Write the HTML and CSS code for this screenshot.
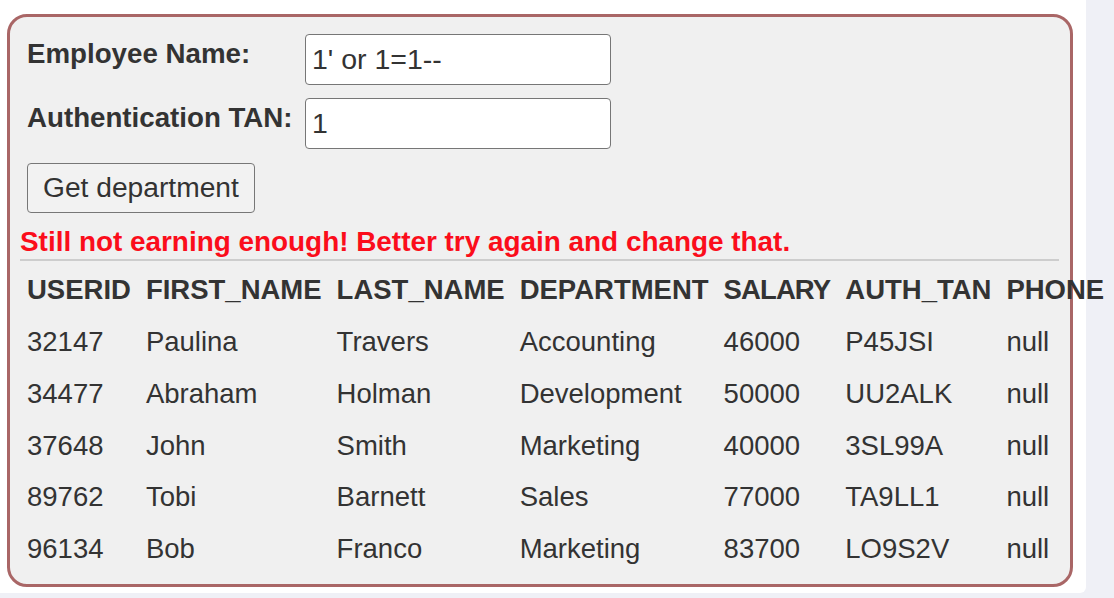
FILE: index.html
```html
<!DOCTYPE html>
<html lang="en">
<head>
<meta charset="utf-8">
<title>SQL Injection</title>
<link rel="stylesheet" href="styles.css">
</head>
<body>
<div class="panel">
  <div class="attack-box">
    <form class="attack-form">
      <div class="fields">
        <label class="field-label" for="name">Employee Name:</label>
        <input class="field-input" id="name" type="text" value="1' or 1=1--">
        <label class="field-label" for="tan">Authentication TAN:</label>
        <input class="field-input" id="tan" type="text" value="1">
      </div>
      <button class="submit-btn" type="button">Get department</button>
    </form>
    <div class="feedback">Still not earning enough! Better try again and change that.</div>
    <table class="results">
      <thead>
        <tr><th>USERID</th><th>FIRST_NAME</th><th>LAST_NAME</th><th>DEPARTMENT</th><th class="narrow">SALARY</th><th>AUTH_TAN</th><th>PHONE</th></tr>
      </thead>
      <tbody>
        <tr><td>32147</td><td>Paulina</td><td>Travers</td><td>Accounting</td><td>46000</td><td>P45JSI</td><td>null</td></tr>
        <tr><td>34477</td><td>Abraham</td><td>Holman</td><td>Development</td><td>50000</td><td>UU2ALK</td><td>null</td></tr>
        <tr><td>37648</td><td>John</td><td>Smith</td><td>Marketing</td><td>40000</td><td>3SL99A</td><td>null</td></tr>
        <tr><td>89762</td><td>Tobi</td><td>Barnett</td><td>Sales</td><td>77000</td><td>TA9LL1</td><td>null</td></tr>
        <tr><td>96134</td><td>Bob</td><td>Franco</td><td>Marketing</td><td>83700</td><td>LO9S2V</td><td>null</td></tr>
      </tbody>
    </table>
  </div>
</div>
</body>
</html>
```

FILE: styles.css
```css
html, body {
  margin: 0;
  padding: 0;
}

body {
  background: #eff0f6;
  font-family: "Liberation Sans", Arial, Helvetica, sans-serif;
  font-size: 27.5px;
  line-height: normal;
  color: #333;
  overflow: hidden;
}

.panel {
  width: 1086px;
  height: 593px;
  box-sizing: border-box;
  background: #fff;
  border-bottom-right-radius: 6px;
  padding: 14px 13px 0 7px;
}

.attack-box {
  box-sizing: border-box;
  width: 1066px;
  height: 573px;
  border: 3px solid #a96666;
  border-radius: 20px;
  background: #f0f0f0;
  padding: 10px 11px 10px 10px;
}

.attack-form {
  margin: 0;
}

.fields {
  display: grid;
  grid-template-columns: 278px 306px;
  row-gap: 13px;
  padding: 7px 0 0 7px;
}

.field-label {
  font-size: 27.7px;
  font-weight: bold;
  padding-top: 4px;
}

.field-input {
  box-sizing: border-box;
  width: 306px;
  height: 51px;
  margin: 0;
  padding: 0 6px;
  border: 1px solid #767676;
  border-radius: 4px;
  background: #fff;
  font-family: inherit;
  font-size: 28.5px;
  color: #333;
}

.submit-btn {
  display: block;
  margin: 14px 0 0 7px;
  padding: 8px 15px;
  border: 1px solid #777;
  border-radius: 4px;
  background: #f2f2f2;
  font-family: inherit;
  font-size: 28.2px;
  line-height: 31.7px;
  color: #333;
}

.feedback {
  margin-top: 13px;
  padding-bottom: 2px;
  border-bottom: 2px solid #cdcdcd;
  color: #fb0d1b;
  font-size: 27.9px;
  line-height: 31.7px;
  font-weight: bold;
  white-space: nowrap;
}

.results {
  margin-top: 2px;
  border-collapse: collapse;
  white-space: nowrap;
}

.results th,
.results td {
  padding: 10px 8px 10px 7px;
  text-align: left;
  line-height: 31.7px;
}

.results th {
  padding-top: 11px;
  font-weight: bold;
}

.results th.narrow {
  letter-spacing: -0.9px;
}

.results td {
  font-weight: normal;
}
```
